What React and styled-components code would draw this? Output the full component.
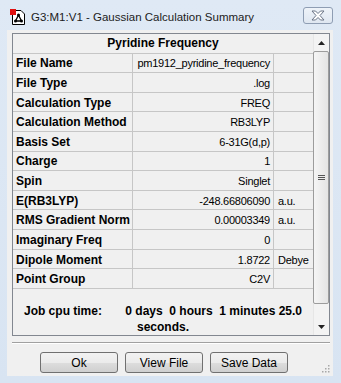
import React from 'react'
import styled, { createGlobalStyle } from 'styled-components'

const GlobalStyle = createGlobalStyle`
  html, body {
    margin: 0;
    padding: 0;
    background: #dbe6f4;
    font-family: "Liberation Sans", Arial, sans-serif;
  }
`

const Window = styled.div`
  width: 341px;
  height: 383px;
  display: flex;
  flex-direction: column;
  background: linear-gradient(#dfe9f5, #d8e4f2);
  box-sizing: border-box;
`

const TitleBar = styled.div`
  height: 30px;
  display: flex;
  align-items: center;
  padding: 3px 8px 0 9px;
  box-sizing: border-box;
`

const TitleText = styled.span`
  margin-left: 5px;
  font-size: 11.5px;
  color: #1c1c1c;
  white-space: nowrap;
`

const CloseButton = styled.div`
  margin-left: auto;
  margin-top: -2px;
  width: 30px;
  height: 17px;
  border: 1px solid #8e9db3;
  border-radius: 3px;
  background: linear-gradient(#eef3f9, #dfe7f1);
  display: flex;
  align-items: center;
  justify-content: center;
  box-sizing: border-box;
`

const Client = styled.div`
  flex: 1;
  margin: 0 8px 7px 7px;
  background: #f0f0f0;
  padding: 3px 3px 0 5px;
  display: flex;
  flex-direction: column;
  position: relative;
`

const Panel = styled.div`
  height: 303px;
  border: 1px solid #828790;
  display: flex;
  box-sizing: border-box;
`

const Table = styled.div`
  flex: 1;
  display: flex;
  flex-direction: column;
`

const HeaderRow = styled.div`
  height: 20px;
  border-bottom: 1px solid #c6c6c6;
  display: flex;
  align-items: center;
  justify-content: center;
  font-size: 12px;
  font-weight: bold;
  color: #000;
  box-sizing: border-box;
`

const Row = styled.div`
  height: 20px;
  border-bottom: 1px solid #c6c6c6;
  display: grid;
  grid-template-columns: 120px 141px 1fr;
  box-sizing: border-box;
`

const Cell = styled.div`
  display: flex;
  align-items: center;
  overflow: hidden;
  white-space: nowrap;
  box-sizing: border-box;
  padding-top: 1px;
  border-right: ${p => (p.$last ? 'none' : '1px solid #c6c6c6')};
  justify-content: ${p => (p.$align === 'right' ? 'flex-end' : 'flex-start')};
  padding-right: ${p => (p.$align === 'right' ? '3px' : '0')};
  padding-left: ${p => (p.$align === 'right' ? '0' : p.$unit ? '4px' : '3px')};
  font-size: ${p => (p.$bold ? '12px' : '11px')};
  font-weight: ${p => (p.$bold ? 'bold' : 'normal')};
  letter-spacing: ${p => (p.$bold ? '0' : '-0.25px')};
  color: #000;
`

const Footer = styled.div`
  flex: 1;
  padding: 14px 6px 0;
  text-align: center;
  font-size: 12px;
  font-weight: bold;
  line-height: 16px;
  white-space: pre-wrap;
  color: #000;
`

const Scrollbar = styled.div`
  width: 16px;
  display: flex;
  flex-direction: column;
  background: #f3f3f3;
  border-left: 1px solid #e6e6e6;
  box-sizing: border-box;
`

const ArrowButton = styled.div`
  height: 17px;
  display: flex;
  align-items: center;
  justify-content: center;
`

const Track = styled.div`
  flex: 1;
  display: flex;
  flex-direction: column;
`

const Thumb = styled.div`
  height: 253px;
  margin: 0 0 0 -1px;
  border: 1px solid #9c9c9c;
  border-radius: 2px;
  background: linear-gradient(to right, #f5f5f5, #e4e4e4);
  display: flex;
  align-items: center;
  justify-content: center;
  box-sizing: border-box;
`

const Separator = styled.div`
  height: 1px;
  margin: 6px 0 0 0;
  background: #a0a0a0;
  border-bottom: 1px solid #fff;
`

const ButtonRow = styled.div`
  display: flex;
  gap: 7px;
  padding: 8px 0 0 28px;
`

const Button = styled.button`
  width: 78px;
  height: 21px;
  border: 1px solid #707070;
  border-radius: 3px;
  background: linear-gradient(#f2f2f2 0%, #ebebeb 50%, #dddddd 51%, #cfcfcf 100%);
  font-family: "Liberation Sans", Arial, sans-serif;
  font-size: 12px;
  color: #000;
  padding: 0;
  box-sizing: border-box;
`

const Grip = styled.svg`
  position: absolute;
  right: 3px;
  bottom: 3px;
`

const rows = [
  ['File Name', 'pm1912_pyridine_frequency', ''],
  ['File Type', '.log', ''],
  ['Calculation Type', 'FREQ', ''],
  ['Calculation Method', 'RB3LYP', ''],
  ['Basis Set', '6-31G(d,p)', ''],
  ['Charge', '1', ''],
  ['Spin', 'Singlet', ''],
  ['E(RB3LYP)', '-248.66806090', 'a.u.'],
  ['RMS Gradient Norm', '0.00003349', 'a.u.'],
  ['Imaginary Freq', '0', ''],
  ['Dipole Moment', '1.8722', 'Debye'],
  ['Point Group', 'C2V', '']
]

const AppIcon = () => (
  <svg width='17' height='17' viewBox='0 0 17 17'>
    <path d='M3.5 2.5 H12 L15.5 6 V16.5 H3.5 Z' fill='#fff' stroke='#000' />
    <rect x='1' y='1' width='6' height='6' fill='#e01010' />
    <circle cx='9.5' cy='7' r='1.5' fill='#000' />
    <circle cx='6.5' cy='13' r='1.5' fill='#000' />
    <circle cx='12.5' cy='13' r='1.5' fill='#000' />
    <path d='M9.5 7 L6.5 13 M9.5 7 L12.5 13 M6.5 13 H12.5' stroke='#000' strokeWidth='1.3' />
  </svg>
)

const CloseGlyph = () => (
  <svg width='14' height='11' viewBox='0 0 14 11'>
    <path
      d='M1 1 H4.5 L7 3.5 L9.5 1 H13 L9 5.5 L13 10 H9.5 L7 7.5 L4.5 10 H1 L5 5.5 Z'
      fill='#fff'
      stroke='#6a7486'
      strokeWidth='1'
      strokeLinejoin='round'
    />
  </svg>
)

const Triangle = ({ down }) => (
  <svg width='7' height='4' viewBox='0 0 7 4'>
    <path d={down ? 'M0 0 H7 L3.5 4 Z' : 'M0 4 H7 L3.5 0 Z'} fill='#222' />
  </svg>
)

export default function App () {
  return (
    <>
      <GlobalStyle />
      <Window>
        <TitleBar>
          <AppIcon />
          <TitleText>G3:M1:V1 - Gaussian Calculation Summary</TitleText>
          <CloseButton>
            <CloseGlyph />
          </CloseButton>
        </TitleBar>
        <Client>
          <Panel>
            <Table>
              <HeaderRow>Pyridine Frequency</HeaderRow>
              {rows.map(([label, value, unit]) => (
                <Row key={label}>
                  <Cell $bold>{label}</Cell>
                  <Cell $align='right'>{value}</Cell>
                  <Cell $unit $last>{unit}</Cell>
                </Row>
              ))}
              <Footer>{'Job cpu time:       0 days  0 hours  1 minutes 25.0 seconds.'}</Footer>
            </Table>
            <Scrollbar>
              <ArrowButton>
                <Triangle />
              </ArrowButton>
              <Track>
                <Thumb>
                  <svg width='7' height='6' viewBox='0 0 7 6'>
                    <path d='M0 0.5 H7 M0 2.5 H7 M0 4.5 H7' stroke='#555' strokeWidth='1' />
                  </svg>
                </Thumb>
              </Track>
              <ArrowButton>
                <Triangle down />
              </ArrowButton>
            </Scrollbar>
          </Panel>
          <Separator />
          <ButtonRow>
            <Button>Ok</Button>
            <Button>View File</Button>
            <Button>Save Data</Button>
          </ButtonRow>
          <Grip width='8' height='8' viewBox='0 0 8 8'>
            <rect x='6' y='0' width='1.5' height='1.5' fill='#a8a8a8' />
            <rect x='3' y='3' width='1.5' height='1.5' fill='#a8a8a8' />
            <rect x='6' y='3' width='1.5' height='1.5' fill='#a8a8a8' />
            <rect x='0' y='6' width='1.5' height='1.5' fill='#a8a8a8' />
            <rect x='3' y='6' width='1.5' height='1.5' fill='#a8a8a8' />
            <rect x='6' y='6' width='1.5' height='1.5' fill='#a8a8a8' />
          </Grip>
        </Client>
      </Window>
    </>
  )
}
